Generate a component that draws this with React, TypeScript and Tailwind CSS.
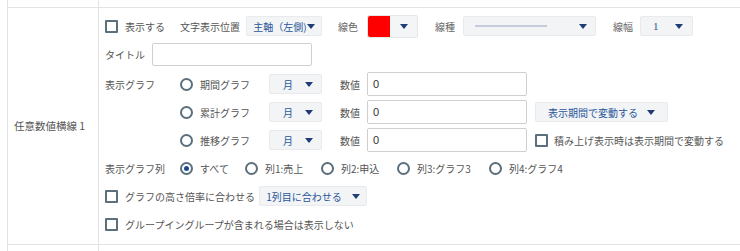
import React from "react";

const line = "border-[#e3e3e3]";

function Arrow() {
  return <span className="inline-block h-0 w-0 border-x-[4px] border-t-[5px] border-x-transparent border-t-[#1d3c78]" />;
}

function Checkbox() {
  return <span className="inline-block h-[13px] w-[13px] shrink-0 rounded-[1px] border-2 border-[#5b6f7c] bg-white" />;
}

function Radio({ checked = false }: { checked?: boolean }) {
  return (
    <span className="flex h-[13px] w-[13px] shrink-0 items-center justify-center rounded-full border-2 border-[#5b6f7c] bg-white">
      {checked && <span className="h-[5px] w-[5px] rounded-full bg-[#1d4a8c]" />}
    </span>
  );
}

function Select({ children, className }: { children?: React.ReactNode; className: string }) {
  return (
    <div
      className={`flex h-[20px] items-center justify-between rounded-[2px] border border-[#e8eaed] bg-[#f2f4f6] text-[#2a5699] ${className}`}
    >
      {children}
    </div>
  );
}

function NumInput() {
  return (
    <div className="flex h-[24px] w-[160px] items-center rounded-[2px] border border-[#cfcfcf] bg-white pl-[5px] font-['Liberation_Sans',sans-serif] text-[11px] text-[#333]">
      0
    </div>
  );
}

const graphRows = [
  { label: "期間グラフ", extra: null as React.ReactNode },
  {
    label: "累計グラフ",
    extra: (
      <Select className="ml-[8px] w-[133px] pl-[12px] pr-[12px]">
        <span>表示期間で変動する</span>
        <Arrow />
      </Select>
    ),
  },
  {
    label: "推移グラフ",
    extra: (
      <div className="ml-[8px] flex items-center gap-[6px]">
        <Checkbox />
        <span>積み上げ表示時は表示期間で変動する</span>
      </div>
    ),
  },
];

const columns = [
  { label: "すべて", w: "w-[65px]", checked: true },
  { label: "列1:売上", w: "w-[76px]", checked: false },
  { label: "列2:申込", w: "w-[76px]", checked: false },
  { label: "列3:グラフ3", w: "w-[92px]", checked: false },
  { label: "列4:グラフ4", w: "", checked: false },
];

export default function App() {
  return (
    <div className="h-[251px] w-[740px] overflow-hidden bg-white font-['Noto_Sans_CJK_JP',sans-serif] text-[10px] text-[#555]">
      <div className={`ml-[7px] flex h-full flex-col border-l ${line}`}>
        <div className="flex h-[7px]">
          <div className={`w-[91px] border-r ${line}`} />
        </div>
        <div className={`flex border-y ${line}`}>
          <div className={`flex w-[91px] items-center border-r pl-[6px] text-[10.5px] ${line}`}>任意数値横線 1</div>
          <div className="flex flex-1 flex-col pb-[6px] pl-[6px] pt-[4px]">
            {/* row 1 */}
            <div className="flex h-[28px] items-center">
              <Checkbox />
              <span className="ml-[7px] w-[55px]">表示する</span>
              <span className="w-[66px]">文字表示位置</span>
              <Select className="w-[76px] justify-center gap-0">
                <span>主軸（左側)</span>
                <Arrow />
              </Select>
              <span className="ml-[16px] w-[29px] text-[#666]">線色</span>
              <div className="flex h-[23px] w-[51px] items-center rounded-[2px] border border-[#e6e6e6] bg-[#f4f5f7]">
                <span className="h-full w-[22px] rounded-l-[2px] bg-[#ff0000]" />
                <span className="flex flex-1 justify-center">
                  <Arrow />
                </span>
              </div>
              <span className="ml-[17px] w-[28px] text-[#666]">線種</span>
              <Select className="w-[133px] pl-[11px] pr-[8px]">
                <span className="h-[2px] w-[72px] bg-[#c3ccd8]" />
                <Arrow />
              </Select>
              <span className="ml-[17px] w-[27px] text-[#666]">線幅</span>
              <Select className="w-[53px] pl-[12px] pr-[9px]">
                <span className="font-['Liberation_Serif',serif] text-[11px]">1</span>
                <Arrow />
              </Select>
            </div>
            {/* row 2 */}
            <div className="flex h-[28px] items-center">
              <span className="w-[47px]">タイトル</span>
              <div className="h-[23px] w-[160px] rounded-[2px] border border-[#cfcfcf] bg-white" />
            </div>
            {/* rows 3-5 */}
            <div className="mt-[2px] flex">
              <div className="flex h-[28px] w-[75px] items-center">表示グラフ</div>
              <div className="flex flex-col">
                {graphRows.map((r) => (
                  <div key={r.label} className="flex h-[28px] items-center">
                    <div className="flex w-[89px] items-center gap-[7px]">
                      <Radio />
                      <span>{r.label}</span>
                    </div>
                    <Select className="h-[19px] w-[53px] pl-[13px] pr-[8px]">
                      <span>月</span>
                      <Arrow />
                    </Select>
                    <span className="ml-[18px] w-[27px]">数値</span>
                    <NumInput />
                    {r.extra}
                  </div>
                ))}
              </div>
            </div>
            {/* row 6 */}
            <div className="flex h-[28px] items-center">
              <span className="w-[75px]">表示グラフ列</span>
              {columns.map((c) => (
                <div key={c.label} className={`flex items-center gap-[7px] ${c.w}`}>
                  <Radio checked={c.checked} />
                  <span>{c.label}</span>
                </div>
              ))}
            </div>
            {/* row 7 */}
            <div className="flex h-[28px] items-center">
              <Checkbox />
              <span className="ml-[7px] w-[134px]">グラフの高さ倍率に合わせる</span>
              <Select className="w-[108px] justify-center gap-[10px]">
                <span>1列目に合わせる</span>
                <Arrow />
              </Select>
            </div>
            {/* row 8 */}
            <div className="flex h-[28px] items-center">
              <Checkbox />
              <span className="ml-[7px]">グループイングループが含まれる場合は表示しない</span>
            </div>
          </div>
        </div>
        <div className="flex flex-1">
          <div className={`w-[91px] border-r ${line}`} />
        </div>
      </div>
    </div>
  );
}
